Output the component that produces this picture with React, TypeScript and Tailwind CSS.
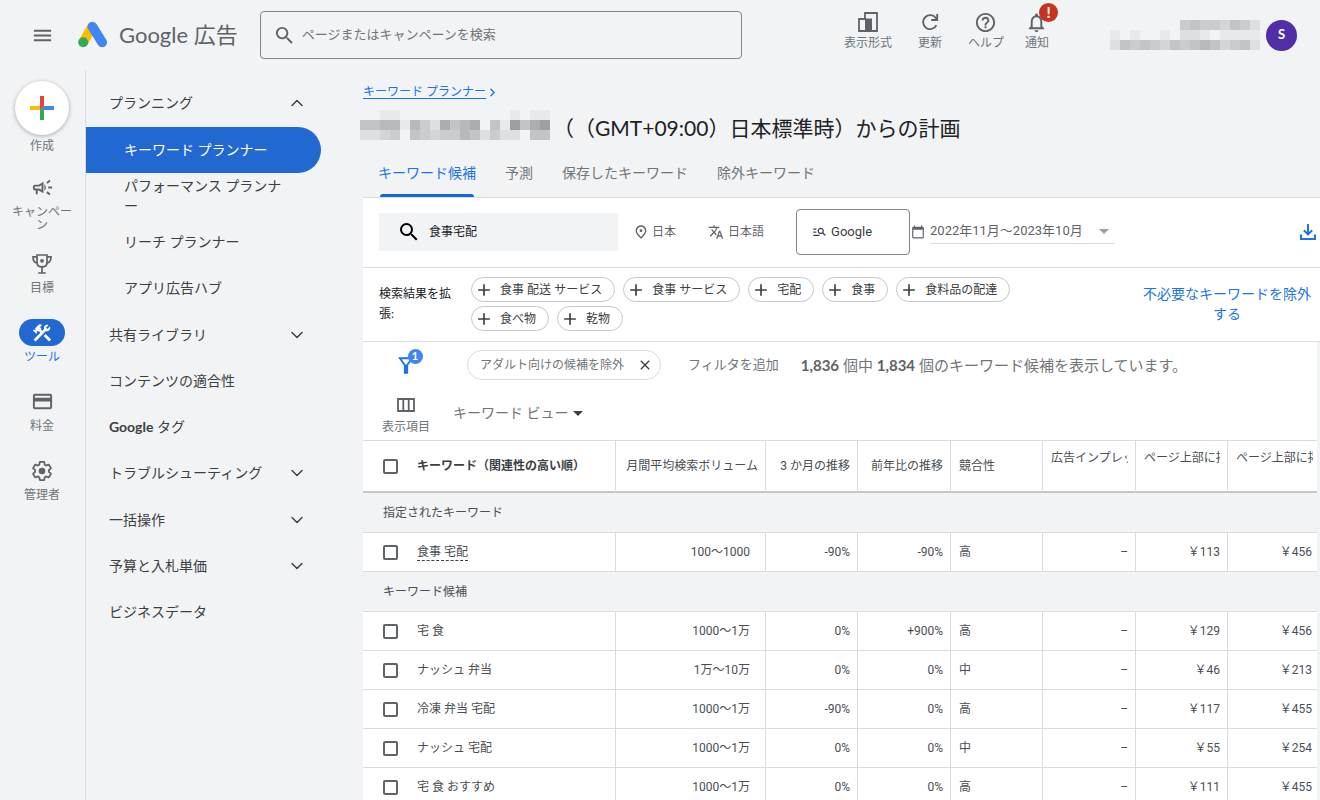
import type { ReactNode } from 'react';
import {
  MdAdd,
  MdCalendarToday,
  MdClose,
  MdConstruction,
  MdCreditCard,
  MdHelpOutline,
  MdManageSearch,
  MdMenu,
  MdNotificationsNone,
  MdOutlineCampaign,
  MdOutlinePlace,
  MdSearch,
  MdTranslate,
} from 'react-icons/md';
import { ChevronDown, ChevronRight, ChevronUp } from 'lucide-react';

function AdsLogo() {
  return (
    <svg width="30" height="28" viewBox="0 0 30 28" aria-hidden="true">
      <path d="M14 6 L6 20" stroke="#fbbc04" strokeWidth="9.6" strokeLinecap="round" />
      <circle cx="5.2" cy="21.2" r="5" fill="#34a853" />
      <path d="M14.4 5.6 L24.2 21.4" stroke="#4285f4" strokeWidth="9.6" strokeLinecap="round" />
    </svg>
  );
}

function CreatePlus() {
  return (
    <svg width="24" height="24" viewBox="0 0 24 24" aria-hidden="true">
      <path d="M10 14l4-4v14h-4z" fill="#34a853" />
      <path d="M0 10h10l2 2-2 2H0z" fill="#fbbc04" />
      <path d="M14 10h10v4H10z" fill="#4285f4" />
      <path d="M10 0h4v10l-4 4z" fill="#ea4335" />
    </svg>
  );
}

function AppearanceIcon() {
  return (
    <svg width="20" height="20" viewBox="0 0 20 20" fill="none" aria-hidden="true">
      <path d="M7 7V1h12v18H1V7h6" stroke="#5f6368" strokeWidth="1.8" />
      <path d="M7 6.5h7V19H7z" fill="#5f6368" />
    </svg>
  );
}

function RefreshIcon() {
  return (
    <svg width="18" height="18" viewBox="0 0 18 18" fill="none" stroke="#5f6368" strokeWidth="1.9" aria-hidden="true">
      <path d="M15.4 12.2A7 7 0 1 1 15 5.300L15.900 6.500" />
      <path d="M16.200 1v6H10.200" />
    </svg>
  );
}

function TrophyIcon() {
  return (
    <svg width="20" height="20" viewBox="0 0 20 20" fill="none" stroke="#5f6368" strokeWidth="1.7" aria-hidden="true">
      <path d="M5 1h10v7.5c0 2.6-2 4.4-5 4.4s-5-1.8-5-4.4z" />
      <path d="M5 2.8H1c0 4 1 6 4.4 6.4M15 2.8h4c0 4-1 6-4.4 6.4" />
      <path d="M10 13v6M6.2 19h7.6" />
      <circle cx="10" cy="6.8" r="1.9" fill="#5f6368" stroke="none" />
    </svg>
  );
}

function GearIcon() {
  return (
    <svg width="22" height="22" viewBox="0 0 24 24" fill="none" aria-hidden="true">
      <path
        d="M19.43 12.98c.04-.32.07-.64.07-.98 0-.34-.03-.66-.07-.98l2.11-1.65c.19-.15.24-.42.12-.64l-2-3.46a.5.5 0 00-.61-.22l-2.49 1c-.52-.4-1.08-.73-1.69-.98l-.38-2.65A.488.488 0 0014 2h-4c-.25 0-.46.18-.49.42l-.38 2.65c-.61.25-1.17.59-1.69.98l-2.49-1a.566.566 0 00-.18-.03c-.17 0-.34.09-.43.25l-2 3.46c-.13.22-.07.49.12.64l2.11 1.65c-.04.32-.07.65-.07.98s.03.66.07.98l-2.11 1.65c-.19.15-.24.42-.12.64l2 3.46a.5.5 0 00.61.22l2.49-1c.52.4 1.08.73 1.69.98l.38 2.65c.03.24.24.42.49.42h4c.25 0 .46-.18.49-.42l.38-2.65c.61-.25 1.17-.59 1.69-.98l2.49 1c.06.02.12.03.18.03.17 0 .34-.09.43-.25l2-3.46c.12-.22.07-.49-.12-.64l-2.11-1.65z"
        stroke="#5f6368"
        strokeWidth="1.9"
      />
      <circle cx="12" cy="12" r="3.6" fill="#5f6368" />
    </svg>
  );
}

function DownloadIcon() {
  return (
    <svg width="16" height="16" viewBox="0 0 16 16" fill="none" stroke="#1a73e8" strokeWidth="2" aria-hidden="true">
      <path d="M8 0v10M3.8 6.2L8 10.4l4.2-4.2M1 10.5V15h14v-4.5" />
    </svg>
  );
}

function FunnelIcon() {
  return (
    <svg width="16" height="17" viewBox="0 0 16 17" aria-hidden="true">
      <path d="M1.8 1.2h12.4L9.2 8v7.8H6.8V8z" fill="none" stroke="#1a73e8" strokeWidth="1.9" />
      <path d="M6.5 8h3v8h-3z" fill="#1a73e8" />
    </svg>
  );
}

function ColumnsIcon() {
  return (
    <svg width="18" height="14" viewBox="0 0 18 14" fill="none" stroke="#5f6368" strokeWidth="1.8" aria-hidden="true">
      <path d="M1 1h16v12H1zM6.3 1v12M11.7 1v12" />
    </svg>
  );
}

function Caret({ className }: { className: string }) {
  return (
    <svg width="10" height="5" viewBox="0 0 10 5" className={className} aria-hidden="true">
      <path d="M0 0h10L5 5z" fill="currentColor" />
    </svg>
  );
}

// Masked text: each string is one row of 10px cells, '.' is empty, a higher digit is a darker gray.
const shades = ['#e8e9eb', '#dedfe1', '#d4d5d6', '#cbcccd', '#c3c4c5', '#b8b9ba', '#acadaf', '#9f9fa1'];

function MaskedText({ rows, className }: { rows: string[]; className?: string }) {
  return (
    <svg width={rows[0].length * 10} height={rows.length * 10} className={className} shapeRendering="crispEdges" aria-hidden="true">
      {rows.map((row, y) =>
        row.split('').map((cell, x) =>
          cell === '.' ? null : (
            <rect key={`${x}-${y}`} x={x * 10} y={y * 10} width="10" height="10" fill={shades[Number(cell)]} />
          )
        )
      )}
    </svg>
  );
}

function TopAction({ icon, label }: { icon: ReactNode; label: string }) {
  return (
    <button className="flex flex-col items-center text-xs leading-4 whitespace-nowrap text-[#70757a]">
      <span className="flex h-[22px] items-center text-[#5f6368]">{icon}</span>
      <span className="mt-0.5">{label}</span>
    </button>
  );
}

function Header() {
  return (
    <header className="flex h-[70px] shrink-0 items-center pr-[23px]">
      <button className="ml-[31px] text-[#5f6368]" aria-label="メニュー">
        <MdMenu size={23} />
      </button>
      <a href="#" className="ml-6 flex items-center gap-[11px] text-[22px] leading-7 whitespace-nowrap text-[#5f6368]">
        <AdsLogo />
        Google 広告
      </a>
      <label className="ml-[22px] flex h-12 w-[482px] items-center rounded border border-[#80868b] pl-3">
        <MdSearch size={23} className="shrink-0 text-[#5f6368]" />
        <input
          type="text"
          aria-label="検索"
          placeholder="ページまたはキャンペーンを検索"
          className="ml-1.5 w-full bg-transparent text-[13px] outline-none placeholder:text-[#70757a]"
        />
      </label>

      <div className="ml-auto flex items-center pb-2">
        <div className="flex gap-[26px]">
          <TopAction icon={<AppearanceIcon />} label="表示形式" />
          <TopAction icon={<RefreshIcon />} label="更新" />
          <TopAction icon={<MdHelpOutline size={23} />} label="ヘルプ" />
        </div>
        <div className="relative ml-[21px]">
          <TopAction icon={<MdNotificationsNone size={23} />} label="通知" />
          <span className="absolute -top-2 left-3.5 flex size-[19px] items-center justify-center rounded-full bg-[#c5341f] text-[15px] font-bold text-white">
            !
          </span>
        </div>
      </div>
      <MaskedText
        className="ml-[51px]"
        rows={['........34332431', '.0.0..0.110.0000', '.143432434542341']}
      />
      <button className="ml-1.5 size-[31px] rounded-full bg-[#512da8] text-[13px] font-bold text-white">S</button>
    </header>
  );
}

function RailItem({ icon, label, active }: { icon: ReactNode; label: string; active?: boolean }) {
  return (
    <button className="flex min-h-[69px] w-full flex-col items-center pb-[19px]">
      <span
        className={`flex h-[27px] w-[46px] shrink-0 items-center justify-center rounded-full ${
          active ? 'bg-[#2168d1] text-white' : 'text-[#5f6368]'
        }`}
      >
        {icon}
      </span>
      <span className={`mt-1 w-16 text-xs leading-[13px] ${active ? 'text-[#1a73e8]' : 'text-[#70757a]'}`}>{label}</span>
    </button>
  );
}

function Rail() {
  return (
    <nav className="flex w-[86px] shrink-0 flex-col items-center border-r border-[#dadce0] pt-[11px] pr-px">
      <button className="mb-[22px] flex flex-col items-center text-xs leading-[13px] text-[#70757a]">
        <span className="flex size-[54px] items-center justify-center rounded-full bg-white shadow-[0_1px_4px_rgba(60,64,67,0.4)]">
          <CreatePlus />
        </span>
        <span className="mt-1">作成</span>
      </button>
      <RailItem icon={<MdOutlineCampaign size={23} />} label="キャンペーン" />
      <RailItem icon={<TrophyIcon />} label="目標" />
      <RailItem icon={<MdConstruction size={22} />} label="ツール" active />
      <RailItem icon={<MdCreditCard size={23} />} label="料金" />
      <RailItem icon={<GearIcon />} label="管理者" />
    </nav>
  );
}

function NavGroup({ label, open }: { label: ReactNode; open?: boolean }) {
  const Chevron = open ? ChevronUp : ChevronDown;
  return (
    <button className="flex h-[46px] w-full items-center justify-between pr-3.5 pl-[23px] text-left">
      {label}
      <Chevron size={20} strokeWidth={1.7} />
    </button>
  );
}

function NavLink({ children }: { children: ReactNode }) {
  return (
    <a href="#" className="flex h-[46px] items-center pl-[23px]">
      {children}
    </a>
  );
}

function SideNav() {
  return (
    <nav className="w-[235px] shrink-0 pt-2.5 text-sm text-[#3c4043]">
      <NavGroup label="プランニング" open />
      <div className="my-px leading-5">
        <a href="#" className="flex h-[46px] items-center rounded-r-full bg-[#2168d1] pl-[38px] text-white">
          キーワード プランナー
        </a>
        <a href="#" className="flex h-[46px] items-center pr-9 pl-[38px]">
          パフォーマンス プランナー
        </a>
        <a href="#" className="flex h-[46px] items-center pl-[38px]">
          リーチ プランナー
        </a>
        <a href="#" className="flex h-[46px] items-center pl-[38px]">
          アプリ広告ハブ
        </a>
      </div>
      <NavGroup label="共有ライブラリ" />
      <NavLink>コンテンツの適合性</NavLink>
      <NavLink>
        <span>
          <span className="font-bold">Google</span> タグ
        </span>
      </NavLink>
      <NavGroup label="トラブルシューティング" />
      <div className="mt-px">
        <NavGroup label="一括操作" />
        <NavGroup label="予算と入札単価" />
        <NavLink>ビジネスデータ</NavLink>
      </div>
    </nav>
  );
}

function Tabs() {
  return (
    <div role="tablist" className="flex gap-[29px] border-b border-[#dadce0] pl-[15px] text-sm leading-5 text-[#70757a]">
      <button role="tab" aria-selected="true" className="relative pt-[21px] pb-3.5 text-[#1a73e8]">
        キーワード候補
        <span className="absolute inset-x-0.5 bottom-0 h-[3px] rounded-t-sm bg-[#1763e0]" />
      </button>
      {['予測', '保存したキーワード', '除外キーワード'].map((tab) => (
        <button key={tab} role="tab" aria-selected="false" className="pt-[21px] pb-3.5">
          {tab}
        </button>
      ))}
    </div>
  );
}

function SearchBar() {
  return (
    <div className="flex h-[70px] items-center border-b border-[#dadce0] pr-1 pb-0.5 pl-4 text-xs whitespace-nowrap text-[#5f6368]">
      <label className="flex h-[38px] w-[239px] items-center bg-[#f1f3f4] pl-[18px]">
        <MdSearch size={24} className="shrink-0 text-black" />
        <input
          type="text"
          aria-label="キーワード"
          defaultValue="食事宅配"
          className="ml-2 w-full bg-transparent text-[#202124] outline-none"
        />
      </label>
      <button className="ml-[15px] flex items-center gap-[3px]">
        <MdOutlinePlace size={16} />
        日本
      </button>
      <button className="ml-8 flex items-center gap-1">
        <MdTranslate size={16} />
        日本語
      </button>
      <button className="ml-8 flex h-[46px] w-[114px] items-center gap-1 rounded border border-[#80868b] pl-[15px] font-[Roboto] text-[13px] text-[#3c4043]">
        <MdManageSearch size={15} />
        Google
      </button>
      <MdCalendarToday size={14} className="ml-px" />
      <div className="relative ml-[5px] w-[185px] border-b border-[#dadce0]">
        <select
          aria-label="期間"
          className="h-6 w-full appearance-none bg-transparent font-['Roboto','Noto_Sans_CJK_JP',sans-serif] text-[13px] text-[#5f6368] outline-none"
        >
          <option>2022年11月～2023年10月</option>
        </select>
        <Caret className="pointer-events-none absolute top-2.5 right-1.5 text-[#9aa0a6]" />
      </div>
      <button className="ml-auto" aria-label="ダウンロード">
        <DownloadIcon />
      </button>
    </div>
  );
}

const suggestions = ['食事 配送 サービス', '食事 サービス', '宅配', '食事', '食料品の配達', '食べ物', '乾物'];

function ExpandResults() {
  return (
    <div className="flex items-start border-b border-[#dadce0] pr-[7px] pl-4 text-xs text-[#3c4043]">
      <p className="w-[92px] shrink-0 pt-4 pr-4 leading-5 text-[#202124]">検索結果を拡張:</p>
      <div className="flex max-w-[560px] flex-wrap gap-x-2 gap-y-1 pt-[9px] pb-2.5">
        {suggestions.map((word) => (
          <button
            key={word}
            className="flex h-[25px] items-center gap-1.5 rounded-full border border-[#c4c7cc] pr-3 pl-0.5 whitespace-nowrap"
          >
            <MdAdd size={20} />
            {word}
          </button>
        ))}
      </div>
      <a href="#" className="ml-auto w-[172px] shrink-0 pt-4 text-center text-sm leading-5 text-[#1a73e8]">
        不必要なキーワードを除外する
      </a>
    </div>
  );
}

function Filters() {
  return (
    <div className="pt-2 pb-1.5 text-[#70757a]">
      <div className="flex h-[30px] items-center whitespace-nowrap">
        <button className="flex w-[85px] justify-center" aria-label="フィルタ">
          <span className="relative">
            <FunnelIcon />
            <span className="absolute -top-2 left-2.5 flex size-[15px] items-center justify-center rounded-full bg-[#4285f4] text-[11px] font-bold text-white">
              1
            </span>
          </span>
        </button>
        <button className="ml-[19px] flex h-[30px] w-[194px] items-center justify-between rounded-full border border-[#dadce0] pr-[7px] pl-3 text-xs">
          アダルト向けの候補を除外
          <MdClose size={16} className="text-[#3c4043]" />
        </button>
        <button className="ml-[27px] text-[13px]">フィルタを追加</button>
        <p className="ml-[22px] text-[15px] leading-6">
          <span className="font-bold text-[#5f6368]">1,836</span> 個中 <span className="font-bold text-[#5f6368]">1,834</span>{' '}
          個のキーワード候補を表示しています。
        </p>
      </div>
      <div className="mt-4 flex">
        <button className="flex w-[86px] flex-col items-center text-xs leading-[14px]">
          <span className="flex h-[18px] items-center">
            <ColumnsIcon />
          </span>
          <span className="mt-1.5">表示項目</span>
        </button>
        <button className="ml-1 flex h-[34px] items-center gap-1 text-sm">
          キーワード ビュー
          <Caret className="text-[#3c4043]" />
        </button>
      </div>
    </div>
  );
}

interface KeywordRow {
  keyword: string;
  volume: string;
  threeMonths: string;
  yearly: string;
  competition: string;
  low: string;
  high: string;
  planned?: boolean;
}

const provided: KeywordRow[] = [
  { keyword: '食事 宅配', volume: '100～1000', threeMonths: '-90%', yearly: '-90%', competition: '高', low: '￥113', high: '￥456', planned: true },
];

const ideas: KeywordRow[] = [
  { keyword: '宅 食', volume: '1000～1万', threeMonths: '0%', yearly: '+900%', competition: '高', low: '￥129', high: '￥456' },
  { keyword: 'ナッシュ 弁当', volume: '1万～10万', threeMonths: '0%', yearly: '0%', competition: '中', low: '￥46', high: '￥213' },
  { keyword: '冷凍 弁当 宅配', volume: '1000～1万', threeMonths: '-90%', yearly: '0%', competition: '高', low: '￥117', high: '￥455' },
  { keyword: 'ナッシュ 宅配', volume: '1000～1万', threeMonths: '0%', yearly: '0%', competition: '中', low: '￥55', high: '￥254' },
  { keyword: '宅 食 おすすめ', volume: '1000～1万', threeMonths: '0%', yearly: '0%', competition: '高', low: '￥111', high: '￥455' },
];

function Checkbox({ label }: { label: string }) {
  return (
    <input
      type="checkbox"
      aria-label={label}
      className="mr-[19px] size-[15px] shrink-0 appearance-none rounded-xs border-2 border-[#5f6368] bg-white checked:bg-[#5f6368]"
    />
  );
}

function SectionRow({ children }: { children: ReactNode }) {
  return (
    <tr>
      <th colSpan={8} scope="colgroup" className="h-10 border-b border-[#dadce0] bg-[#f1f3f4] pl-5 text-left font-normal">
        {children}
      </th>
    </tr>
  );
}

function DataRow({ row }: { row: KeywordRow }) {
  const cell = 'border-r border-b border-[#dadce0] pr-[7px] text-right';
  return (
    <tr>
      <td className="h-[39px] border-r border-b border-[#dadce0] pl-5">
        <div className="flex items-center">
          <Checkbox label={row.keyword} />
          <span className={row.planned ? 'border-b border-dashed border-[#3c4043] leading-4' : 'leading-4'}>{row.keyword}</span>
        </div>
      </td>
      <td className="border-r border-b border-[#dadce0] pr-[15px] text-right">{row.volume}</td>
      <td className={cell}>{row.threeMonths}</td>
      <td className={cell}>{row.yearly}</td>
      <td className="border-r border-b border-[#dadce0] pl-2">{row.competition}</td>
      <td className={cell}>–</td>
      <td className={cell}>{row.low}</td>
      <td className="border-b border-[#dadce0] pr-[5px] text-right">{row.high}</td>
    </tr>
  );
}

function KeywordTable() {
  const head = 'border-t border-r border-b-2 border-[#dadce0] border-b-[#c4c7cc] font-normal whitespace-nowrap';
  return (
    <table className="w-full table-fixed border-separate border-spacing-0 bg-white font-['Roboto','Noto_Sans_CJK_JP',sans-serif] text-xs text-[#4a4e52]">
      <colgroup>
        <col />
        <col className="w-[150px]" />
        <col className="w-[92px]" />
        <col className="w-[93px]" />
        <col className="w-[92px]" />
        <col className="w-[93px]" />
        <col className="w-[92px]" />
        <col className="w-[89px]" />
      </colgroup>
      <thead>
        <tr>
          <th className={`${head} h-[53px] pl-5`}>
            <div className="flex items-center font-bold text-[#3c4043]">
              <Checkbox label="すべて選択" />
              キーワード（関連性の高い順）
            </div>
          </th>
          <th className={`${head} pr-[7px] text-right`}>月間平均検索ボリューム</th>
          <th className={`${head} pr-[7px] text-right`}>3 か月の推移</th>
          <th className={`${head} pr-[7px] text-right`}>前年比の推移</th>
          <th className={`${head} pl-2 text-left`}>競合性</th>
          <th className={`${head} pr-[7px] pb-4 pl-2 text-left`}>
            <div className="overflow-hidden">広告インプレッ</div>
          </th>
          <th className={`${head} pr-[7px] pb-4 pl-2 text-left`}>
            <div className="overflow-hidden">ページ上部に掲</div>
          </th>
          <th className="overflow-hidden border-t border-b-2 border-[#dadce0] border-b-[#c4c7cc] pr-1 pb-4 pl-2 text-left font-normal whitespace-nowrap">
            <div className="overflow-hidden">ページ上部に掲</div>
          </th>
        </tr>
      </thead>
      <tbody>
        <SectionRow>指定されたキーワード</SectionRow>
        {provided.map((row) => (
          <DataRow key={row.keyword} row={row} />
        ))}
        <SectionRow>キーワード候補</SectionRow>
        {ideas.map((row) => (
          <DataRow key={row.keyword} row={row} />
        ))}
      </tbody>
    </table>
  );
}

export default function App() {
  return (
    <div
      lang="ja"
      className="flex h-screen flex-col overflow-hidden bg-[#f1f3f4] font-['Lato','Noto_Sans_CJK_JP',sans-serif] text-[#3c4043]"
    >
      <Header />
      <div className="flex min-h-0 flex-1">
        <Rail />
        <SideNav />
        <main className="ml-[42px] min-w-0 flex-1 pt-[13px]">
          <div className="flex items-center text-xs leading-[18px] text-[#1a73e8]">
            <a href="#" className="underline underline-offset-2">
              キーワード プランナー
            </a>
            <ChevronRight size={13} strokeWidth={2.5} />
          </div>
          <h1 className="mt-[13px] -ml-[3px] flex h-7 items-center gap-[3px] text-[21px] leading-7 whitespace-nowrap text-[#202124] [text-spacing-trim:space-all]">
            <MaskedText
              className="mb-1.5"
              rows={['..00...........0.00', '445505316456.407467', '1123.43233541311.44']}
            />
            <span>（（GMT+09:00）日本標準時）からの計画</span>
          </h1>
          <Tabs />
          <section className="bg-white">
            <SearchBar />
            <ExpandResults />
          </section>
          <section className="mr-[3px] bg-white">
            <Filters />
            <KeywordTable />
          </section>
        </main>
      </div>
    </div>
  );
}
